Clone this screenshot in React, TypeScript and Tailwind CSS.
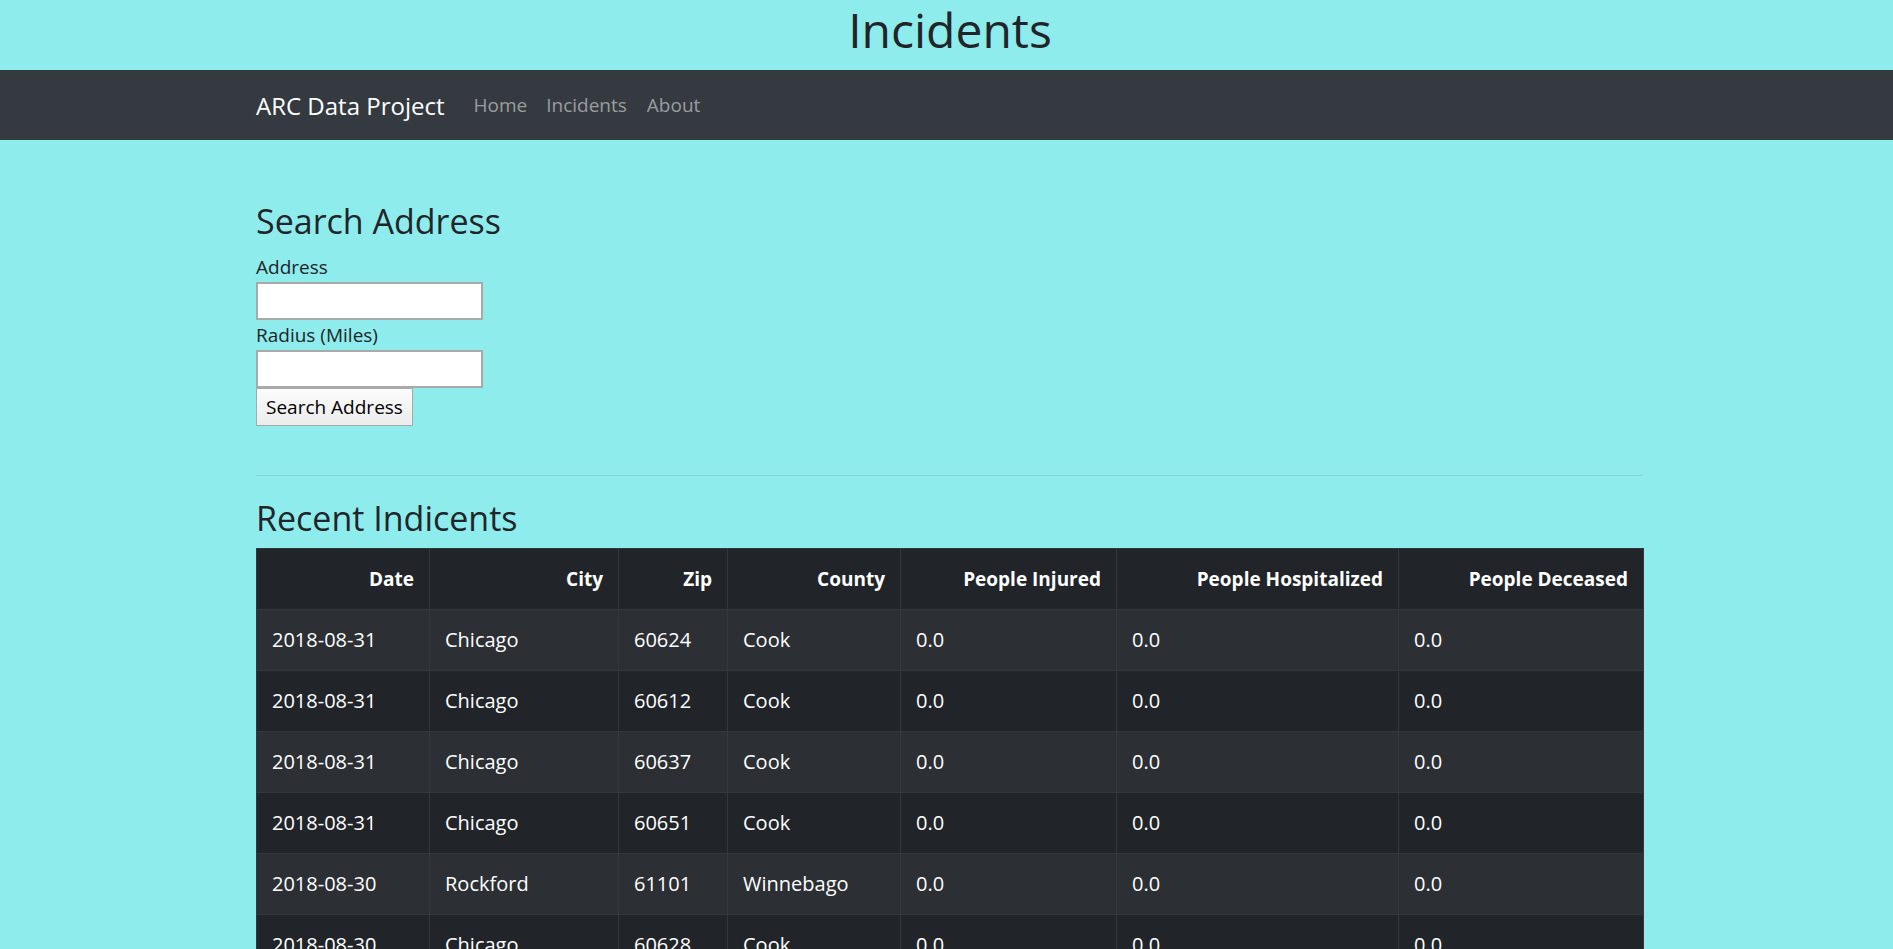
import React from 'react';

const columns = [
  { label: 'Date', width: 'w-[173px]' },
  { label: 'City', width: 'w-[189px]' },
  { label: 'Zip', width: 'w-[109px]' },
  { label: 'County', width: 'w-[173px]' },
  { label: 'People Injured', width: 'w-[216px]' },
  { label: 'People Hospitalized', width: 'w-[282px]' },
  { label: 'People Deceased', width: 'w-[245px]' },
];

const incidents = [
  ['2018-08-31', 'Chicago', '60624', 'Cook'],
  ['2018-08-31', 'Chicago', '60612', 'Cook'],
  ['2018-08-31', 'Chicago', '60637', 'Cook'],
  ['2018-08-31', 'Chicago', '60651', 'Cook'],
  ['2018-08-30', 'Rockford', '61101', 'Winnebago'],
  ['2018-08-30', 'Chicago', '60628', 'Cook'],
  ['2018-08-30', 'Chicago', '60619', 'Cook'],
  ['2018-08-29', 'Peoria', '61603', 'Peoria'],
];

export default function App() {
  return (
    <div className="min-h-screen bg-[#8eecec] font-['Open_Sans',sans-serif] text-[20px] leading-[30px] text-[#212529]">
      {/* page title */}
      <h1 className="pl-[7px] text-center text-[48px] leading-[60px] font-medium mb-[10px]">Incidents</h1>

      {/* navbar */}
      <nav className="bg-[#343a40] h-[70px]">
        <div className="ml-[256px] w-[1387px] h-full flex items-center">
          <a className="text-white text-[24px] leading-[37px] mr-[20px]">ARC Data Project</a>
          <ul className="flex text-[19px]">
            <li><a className="px-[9px] text-white/50">Home</a></li>
            <li><a className="px-[10px] text-white/50">Incidents</a></li>
            <li><a className="px-[10px] text-white/50">About</a></li>
          </ul>
        </div>
      </nav>

      <main className="ml-[256px] w-[1387px] pt-[60px] pb-10">
        {/* search form */}
        <section>
          <h2 className="text-[34px] leading-[42px] font-medium mb-[10px]">Search Address</h2>
          <form className="flex flex-col items-start text-[19px]">
            <label htmlFor="address" className="block leading-[30px]">Address</label>
            <input id="address" type="text" className="w-[227px] h-[38px] bg-white border-2 border-[#a9a9a9] outline-none" />
            <label htmlFor="radius" className="block leading-[30px]">Radius (Miles)</label>
            <input id="radius" type="text" className="w-[227px] h-[38px] bg-white border-2 border-[#a9a9a9] outline-none" />
            <button
              type="button"
              className="h-[38px] px-[9px] border border-[#a9a9a9] bg-gradient-to-b from-[#fcfcfc] to-[#ececec] text-black"
            >
              Search Address
            </button>
          </form>
        </section>

        <hr className="mt-[49px] mb-[21px] border-0 border-t border-black/10" />

        {/* recent incidents */}
        <h2 className="text-[34px] leading-[42px] font-medium mb-[9px]">Recent Indicents</h2>
        <table className="w-full table-fixed border-collapse bg-[#212529] text-white">
          <thead>
            <tr>
              {columns.map((c) => (
                <th key={c.label} className={`${c.width} px-[15px] py-[15px] text-right text-[19px] font-bold border border-[#32383e]`}>
                  {c.label}
                </th>
              ))}
            </tr>
          </thead>
          <tbody>
            {incidents.map((row, i) => (
              <tr key={i} className={i % 2 === 0 ? 'bg-[#2c3034]' : 'bg-[#212529]'}>
                {row.map((cell, j) => (
                  <td key={j} className="px-[15px] py-[15px] border border-[#32383e]">{cell}</td>
                ))}
                <td className="px-[15px] py-[15px] border border-[#32383e]">0.0</td>
                <td className="px-[15px] py-[15px] border border-[#32383e]">0.0</td>
                <td className="px-[15px] py-[15px] border border-[#32383e]">0.0</td>
              </tr>
            ))}
          </tbody>
        </table>
      </main>
    </div>
  );
}
